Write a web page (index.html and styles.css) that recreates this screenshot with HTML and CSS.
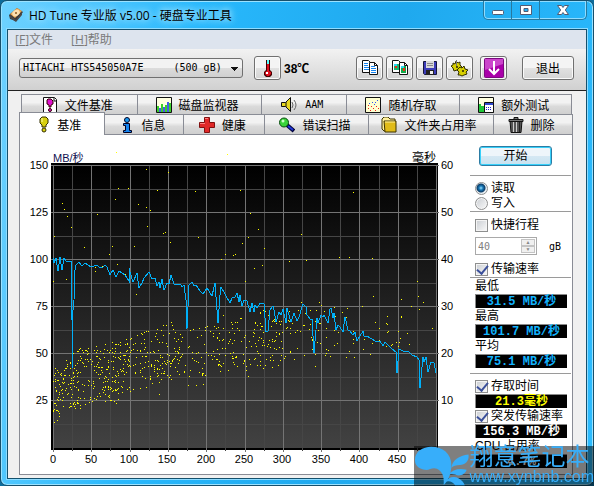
FILE: index.html
```html
<!DOCTYPE html>
<html lang="zh-CN">
<head>
    <meta charset="UTF-8">
    <meta name="viewport" content="width=device-width, initial-scale=1.0">
    <link rel="stylesheet" href="styles.css">
    <title>HD Tune 专业版 v5.00 - 硬盘专业工具</title>
</head>
<body>

    <div class="window">
        <header class="titlebar">
            <svg class="app-icon" width="16" height="16" viewBox="0 0 16 16">
                <path d="M1 8L9 1l6 4-7 9-6-2z" fill="#3a3a3a"/>
                <path d="M2 7L9 1l5 3-7 7z" fill="#e8a552"/>
                <ellipse cx="8" cy="6" rx="4" ry="3" fill="#fbe0b0" transform="rotate(-35 8 6)"/>
                <circle cx="8" cy="6" r="1" fill="#8a5a20"/>
                <path d="M2 8l6 5 6-8v3l-6 7-6-4z" fill="#4a4a4a"/>
            </svg>
            <h1>HD Tune 专业版 v5.00 - 硬盘专业工具</h1>
            <div class="window-buttons">
                <button aria-label="最小化"><svg width="14" height="12" viewBox="0 0 14 12"><rect x="1.500" y="6.500" width="11" height="4" rx="1" fill="#fff" stroke="#535b72"/></svg></button>
                <button aria-label="最大化"><svg width="14" height="12" viewBox="0 0 14 12"><path d="M1.500 1.500h11v9h-11zM5 4.500v3h4v-3z" fill="#fff" fill-rule="evenodd" stroke="#535b72"/></svg></button>
                <button aria-label="关闭" class="close"><svg width="14" height="12" viewBox="0 0 14 12"><path d="M1.500 1.500h4L7 3.500l1.500-2h4L9.300 6l3.200 4.500h-4L7 8.500l-1.500 2h-4L4.700 6z" fill="#fff" stroke="#535b72"/></svg></button>
            </div>
        </header>

        <main class="client">
            <nav class="menu">
                <a href="#">[<u>F</u>]文件</a>
                <a href="#">[<u>H</u>]帮助</a>
            </nav>

            <div class="toolbar">
                <select class="drive" aria-label="硬盘">
                    <option>HITACHI HTS545050A7E&nbsp;&nbsp;&nbsp;&nbsp;&nbsp;(500 gB)</option>
                </select>
                <button class="tool" aria-label="温度">
                    <svg width="16" height="18" viewBox="0 0 16 18"><path d="M6 1h4v10l2 2v3l-2 2H6l-2-2v-3l2-2z" fill="#400"/><path d="M7 1h2v5H7z" fill="#5ff"/><path d="M7 5h2v7l2 1v2l-2 2H7l-2-2v-2l2-1z" fill="#e01020"/><path d="M6 13h2v2H6z" fill="#fff"/></svg>
                </button>
                <span class="temperature">38℃</span>
                <div class="tools">
                    <button class="tool" aria-label="复制文字">
                        <svg width="18" height="18" viewBox="0 0 18 18"><path d="M1.500 1.500h6l2 2v10h-8z" fill="#fff" stroke="#111"/><path d="M8.500 3.500h5l3 3v9h-8z" fill="#fff" stroke="#111"/><path d="M3 4.500h4M3 6.500h4M3 8.500h5M3 10.500h5M10 7.500h4M10 9.500h5M10 11.500h5M10 13.500h5" stroke="#1584ef"/><path d="M13.500 3.500v3h3" fill="none" stroke="#111"/></svg>
                    </button>
                    <button class="tool" aria-label="复制图像">
                        <svg width="18" height="18" viewBox="0 0 18 18"><path d="M1.500 1.500h6l2 2v10h-8z" fill="#fff" stroke="#111"/><path d="M3 5h5v6H3z" fill="#17b46e"/><path d="M3 5h3v2H3z" fill="#29d7f4"/><path d="M8.500 3.500h5l3 3v9h-8z" fill="#fff" stroke="#111"/><path d="M10 7h5v7h-5z" fill="#10a848"/><path d="M10 7h3v2h-3z" fill="#29d7f4"/><path d="M4 7h2v2H4zM12 9h2v3h-2z" fill="#f03010"/><path d="M13.500 3.500v3h3" fill="none" stroke="#111"/></svg>
                    </button>
                    <button class="tool" aria-label="保存">
                        <svg width="18" height="18" viewBox="0 0 18 18"><path d="M2.500 2.500h13v13h-12l-1-1z" fill="#3c3cb8" stroke="#16163a"/><path d="M5 2h8v7H5z" fill="#d8d8d8"/><path d="M6 4.500h6M6 6.500h6" stroke="#888"/><path d="M5 11h8v5H5z" fill="#222"/><path d="M9 12h3v3H9z" fill="#eee"/></svg>
                    </button>
                    <button class="tool" aria-label="选项">
                        <svg width="18" height="18" viewBox="0 0 18 18"><path d="M2 4l2 1 1-3 2 2 2-1v3l2 2-2 1v3l-3-1-3 1-1-3-2-2 2-1z" fill="#d8d000" stroke="#333000"/><path d="M9 8l2 1 2-2 1 3 3 1-2 2 1 2-3 1-2 1-2-1H7l1-3-2-2z" fill="#d8d000" stroke="#333000"/><path d="M5 7h2v2H5zM11 11h2v2h-2z" fill="#554f00"/><path d="M5.500 1v6" stroke="#777"/></svg>
                    </button>
                    <button class="tool update" aria-label="更新">
                        <svg width="20" height="20" viewBox="0 0 20 20"><rect x=".5" y=".5" width="19" height="19" rx="1" fill="#a900a9" stroke="#7c0a80"/><path d="M1 1h18v5L1 12z" fill="#cb45cb"/><path d="M10 3v12M5 11l5 5 5-5" fill="none" stroke="#fff" stroke-width="2"/></svg>
                    </button>
                    <button class="tool exit">退出</button>
                </div>
            </div>

            <div class="tabs">
                <div class="tab-row upper">
                    <button class="w116"><svg width="16" height="16" viewBox="0 0 16 16"><path d="M1.500.5h11l2 2v13h-13z" fill="#fff" stroke="#111"/><path d="M12 1v3h3" fill="none" stroke="#111"/><path d="M6 2h3l2 2v3L9 8v2H7V8L5 7V3z" fill="#e010d0" stroke="#300"/><circle cx="8" cy="13" r="1.500" fill="#e010d0" stroke="#300"/></svg>文件基准</button>
                    <button class="w125"><svg width="16" height="16" viewBox="0 0 16 16"><path d="M.5.5h15v15H.5z" fill="#ffffe0" stroke="#111"/><path d="M1 9h2v6H1zM5 7h2v8H5zM9 8h2v7H9zM13 6h2v9h-2z" fill="#3ad02c"/><path d="M3 11h2v4H3zM7 10h2v5H7zM11 5h2v10h-2z" fill="#4a5be8"/></svg>磁盘监视器</button>
                    <button class="w84"><svg width="18" height="16" viewBox="0 0 18 16"><path d="M1.500 5.500h4l5-5v14l-5-5h-4z" fill="#e9d820" stroke="#111"/><path d="M6 5v5" stroke="#111"/><path d="M12 5q2 3 0 6M14 3q4 5 0 10" fill="none" stroke="#666"/></svg><span class="latin">AAM</span></button>
                    <button class="w114"><svg width="16" height="16" viewBox="0 0 16 16"><path d="M.5.5h15v15H.5z" fill="#ffffd0" stroke="#111"/><path d="M3 11h1v1H3zM6 9h1v1H6zM8 11h1v1H8zM5 13h1v1H5zM11 9h1v1h-1zM13 11h1v1h-1zM10 13h1v1h-1zM3 8h1v1H3z" fill="#e22"/><path d="M4 6h1v1H4zM7 5h1v1H7zM10 5h1v1h-1zM12 3h1v1h-1zM9 7h1v1H9z" fill="#35e"/></svg>随机存取</button>
                    <button class="w112"><svg width="16" height="16" viewBox="0 0 16 16"><path d="M.5.5h15v15H.5z" fill="#ffffe0" stroke="#111"/><path d="M1 7h2v8H1zM3 9h3v6H3z" fill="#20c838"/><path d="M6.500 5.500h9v10h-9z" fill="#fff" stroke="#111"/><path d="M7 6h8v2H7z" fill="#3048d0"/><path d="M8 10h1v1H8zM10 10h1v1h-1zM12 10h1v1h-1zM8 12h1v1H8zM10 12h1v1h-1zM12 12h1v1h-1z" fill="#22c"/></svg>额外测试</button>
                </div>
                <div class="tab-row lower">
                    <button class="w84 active"><svg width="12" height="17" viewBox="0 0 12 17"><path d="M4 1h4l2 2v4L8 9v2H4V9L2 7V3z" fill="#d8d010" stroke="#332f00"/><circle cx="6" cy="14" r="2" fill="#d8d010" stroke="#332f00"/><path d="M4 2v4" stroke="#ffa"/></svg>基准</button>
                    <button class="w79"><svg width="16" height="16" viewBox="0 0 16 16"><circle cx="8" cy="3" r="2.500" fill="#1898f0" stroke="#002"/><path d="M4.500 6.500h6v7h2v2h-8v-2h2v-5h-2z" fill="#1584ef" stroke="#002"/></svg>信息</button>
                    <button class="w80"><svg width="16" height="16" viewBox="0 0 16 16"><path d="M5.500.5h5v5h5v5h-5v5h-5v-5h-5v-5h5z" fill="#e02828" stroke="#801010"/><path d="M6 1.500h3M1 6.500h5" stroke="#ff8080"/></svg>健康</button>
                    <button class="w104"><svg width="17" height="16" viewBox="0 0 17 16"><path d="M9 8l7 6" stroke="#000038" stroke-width="4"/><path d="M10 9l5 4" stroke="#2038d8" stroke-width="2"/><circle cx="6" cy="5.500" r="4.500" fill="#39d43a" stroke="#0a4a10"/><circle cx="5" cy="4" r="1.500" fill="#c9ffc5"/></svg>错误扫描</button>
                    <button class="w127"><svg width="16" height="16" viewBox="0 0 16 16"><path d="M1 2l2-2h4l2 2h5v12H3L1 12z" fill="#fff09a" stroke="#3d3300"/><path d="M3 4h12v11H4z" fill="#e0bb18" stroke="#3d3300"/><path d="M4 5h10" stroke="#fff09a"/></svg>文件夹占用率</button>
                    <button class="w78"><svg width="16" height="16" viewBox="0 0 16 16"><path d="M2 4h12l-1 11.500H3z" fill="#555" stroke="#111"/><path d="M5.500 5v10M8.500 5v10" stroke="#ccc"/><path d="M11.500 5v10" stroke="#222"/><path d="M1 2.500h14v2H1zM6 .5h4v2H6z" fill="#777" stroke="#111"/></svg>删除</button>
                </div>
            </div>

            <section class="panel">
                <svg class="chart" viewBox="20 135 450 339" role="img" aria-label="基准">
                    <defs>
                        <linearGradient id="plot" x1="0" y1="0" x2="0" y2="1">
                            <stop offset="0" stop-color="#000"/>
                            <stop offset="1" stop-color="#424242"/>
                        </linearGradient>
                    </defs>
                    <g shape-rendering="crispEdges">
                        <rect x="51" y="163" width="387" height="287" fill="#000"/>
                        <rect x="53" y="165" width="383" height="283" fill="url(#plot)"/>
                        <path id="gridMinor" class="grid-minor"/>
                        <path id="gridMajor" class="grid-major"/>
                        <path id="dots" class="dots"/>
                        <polyline class="speed" points="53,258 54,263 56,258 58,271 60,257 62,270 64,258 66,261 71,261 72,320 72,369 73,310 74,300 75,270 76,265 79,262 82,266 85,263 91,267 94,266 97,265 100,268 103,267 105,265 107,267 110,275 113,270 116,277 119,271 122,273 125,275 129,281 129,268 133,282 137,273 139,288 142,283 144,278 149,272 152,279 155,278 157,286 159,282 160,288 162,279 164,290 167,283 169,284 171,275 174,284 181,285 182,287 184,285 186,300 187,329 189,285 192,282 194,286 196,285 200,291 203,294 207,288 212,296 215,283 216,297 218,323 220,295 221,287 225,294 230,303 232,298 235,297 237,293 239,302 240,295 242,306 244,300 247,301 250,312 252,303 254,312 255,305 257,308 260,303 264,304 266,332 268,331 270,310 273,306 274,310 276,322 279,312 281,315 283,309 286,323 287,308 291,322 294,313 297,321 299,317 303,304 306,307 307,315 310,319 312,319 314,353 317,318 318,323 321,315 323,317 324,315 328,323 330,309 331,308 333,318 334,313 336,330 338,325 340,327 343,332 345,317 348,330 350,331 353,335 355,332 357,341 363,331 364,336 367,336 375,341 380,341 383,346 385,342 388,345 392,349 396,352 397,373 399,349 405,352 408,351 412,355 417,357 419,360 420,388 423,357 424,362 426,357 428,372 431,362 434,363 436,373"/>
                    </g>
                    <g class="axis" text-anchor="end">
                        <text x="48" y="169">150</text>
                        <text x="48" y="216">125</text>
                        <text x="48" y="263">100</text>
                        <text x="48" y="310">75</text>
                        <text x="48" y="357">50</text>
                        <text x="48" y="404">25</text>
                    </g>
                    <g class="axis">
                        <text x="441" y="169">60</text>
                        <text x="441" y="216">50</text>
                        <text x="441" y="263">40</text>
                        <text x="441" y="310">30</text>
                        <text x="441" y="357">20</text>
                        <text x="441" y="404">10</text>
                    </g>
                    <g class="axis" text-anchor="middle">
                        <text x="53" y="463">0</text>
                        <text x="91" y="463">50</text>
                        <text x="129" y="463">100</text>
                        <text x="167" y="463">150</text>
                        <text x="206" y="463">200</text>
                        <text x="244" y="463">250</text>
                        <text x="282" y="463">300</text>
                        <text x="321" y="463">350</text>
                        <text x="359" y="463">400</text>
                        <text x="397" y="463">450</text>
                    </g>
                    <text class="unit" x="53" y="162">MB/秒</text>
                    <text class="unit ms" x="412" y="162">毫秒</text>
                </svg>

                <form class="side">
                    <button type="button" class="start">开始</button>
                    <div class="group modes">
                        <label><input type="radio" name="mode" checked>读取</label>
                        <label><input type="radio" name="mode">写入</label>
                    </div>
                    <div class="group stroke">
                        <label><input type="checkbox">快捷行程</label>
                        <div class="amount">
                            <input type="text" id="size" value="40" disabled aria-label="快捷行程 gB">
                            <span class="spin"><i>▲</i><i>▼</i></span>
                            <label for="size" class="latin">gB</label>
                        </div>
                        <label><input type="checkbox" checked>传输速率</label>
                    </div>
                    <div class="group">
                        <p>最低</p>
                        <output>31.5 MB/秒</output>
                        <p>最高</p>
                        <output>101.7 MB/秒</output>
                        <p>平均</p>
                        <output>75.1 MB/秒</output>
                    </div>
                    <div class="group times">
                        <label><input type="checkbox" checked>存取时间</label>
                        <output class="yellow">21.3毫秒</output>
                        <label><input type="checkbox" checked>突发传输速率</label>
                        <output class="white">156.3 MB/秒</output>
                        <p>CPU 占用率</p>
                        <output class="white">4.7%</output>
                    </div>
                </form>
            </section>
        </main>
    </div>

    <div class="watermark">
        <svg width="58" height="40" viewBox="0 0 58 40" fill="#37aefa">
            <path d="M1 14C1 5 9 0 18 0c12 0 21 7 21 19 0 9-3 16-8 21 1-9-2-15-7-17-5-2-8 2-13 1C5 23 1 19 1 14z"/>
            <path d="M39 22c1-8 8-13 18-14 1 7-4 11-9 11-4 0-7 1-9 3z"/>
            <path d="M36 29c4-5 11-7 19-5-2 6-8 7-12 5-3-1-5-1-7 0z"/>
            <path d="M32 37c4-5 9-7 15-4 3 2 5 4 6 7H43c-3-4-7-5-11-3z"/>
        </svg>
        <div>
            <strong>翔意笔记本</strong>
            <span>www.xynbnb.com</span>
        </div>
    </div>

    <script src="chart.js"></script>
</body>
</html>
```
FILE: styles.css
```css
* {
    box-sizing: border-box;
}

body {
    margin: 0;
    font-family: "Liberation Sans", "Noto Sans CJK SC", sans-serif;
    font-size: 12px;
    color: #000;
    background-color: #0d6c9c;
}

button, input, select {
    font: inherit;
    color: inherit;
    margin: 0;
    padding: 0;
}

h1, p {
    margin: 0;
    font-weight: normal;
}

/* Ventana */
.window {
    min-height: 100vh;
    padding: 0 6px 6px;
    border: 1px solid #17506c;
    border-radius: 7px;
    background: linear-gradient(100deg, #6fd2ff 0, #28b8fc 30%, #1fa9ee 60%, #2cbcff 100%);
    box-shadow: inset 0 0 0 1px #9be2ff;
    display: flex;
    flex-direction: column;
}

.titlebar {
    display: flex;
    height: 28px;
    align-items: center;
    padding-left: 1px;
}

.titlebar h1 {
    flex: 1;
    margin-left: 5px;
    font-family: "Open Sans", "Noto Sans CJK SC", sans-serif;
    font-size: 12px;
    text-shadow: 0 0 6px #b5eaff, 0 0 8px #b5eaff;
}

.window-buttons {
    display: flex;
    align-self: flex-start;
    border: 1px solid #27799f;
    border-top: none;
    border-radius: 0 0 5px 5px;
    box-shadow: inset 0 0 0 1px #8fdcff;
}

.window-buttons button {
    display: flex;
    align-items: center;
    justify-content: center;
    width: 28px;
    height: 18px;
    border: none;
    border-right: 1px solid #27799f;
    background: none;
}

.window-buttons .close {
    width: 46px;
    border-right: none;
}

.client {
    flex: 1;
    border: 1px solid #14506c;
    background-color: #f0f0f0;
    box-shadow: 0 0 0 1px #8fdcff;
}

.menu {
    display: flex;
    gap: 18px;
    height: 19px;
    padding-left: 7px;
    line-height: 19px;
    font-family: "Open Sans", "Noto Sans CJK SC", sans-serif;
    background-color: #dde4ee;
}

.menu a {
    color: #7a7a7a;
    text-decoration: none;
}

/* Barra de herramientas */
.toolbar {
    display: flex;
    align-items: center;
    height: 42px;
    padding: 0 12px 4px 11px;
    border-bottom: 1px solid #222;
    background: linear-gradient(#f2f2f2, #d0d0d0);
}

.drive {
    appearance: none;
    width: 224px;
    height: 20px;
    padding-left: 3px;
    border: 1px solid #707070;
    border-radius: 3px;
    font-family: "DejaVu Sans Mono", monospace;
    font-size: 10px;
    background:
        linear-gradient(to bottom right, #111 50%, transparent 50%) 215px 8px / 4px 4px no-repeat,
        linear-gradient(to bottom left, #111 50%, transparent 50%) 211px 8px / 4px 4px no-repeat,
        linear-gradient(#f2f2f2 50%, #dcdcdc 50%, #d0d0d0);
}

.tool {
    display: flex;
    align-items: center;
    justify-content: center;
    width: 27px;
    height: 24px;
    border: 1px solid #707070;
    border-radius: 3px;
    background: linear-gradient(#f4f4f4 50%, #e2e2e2 50%, #d4d4d4);
    box-shadow: inset 0 0 0 1px #fafafa;
}

.drive + .tool {
    margin-left: 11px;
}

.temperature {
    margin-left: 3px;
    font-weight: bold;
}

.tools {
    display: flex;
    gap: 3px;
    margin-left: auto;
}

.update {
    margin-left: 4px;
}

.exit {
    width: 52px;
    margin-left: 12px;
}

/* Pestañas */
.tabs {
    padding: 3px 13px 0 11px;
}

.tab-row {
    display: flex;
    height: 20px;
}

.upper {
    padding: 0 1px 0 2px;
}

.tab-row button {
    display: flex;
    align-items: center;
    justify-content: center;
    gap: 7px;
    min-width: 0;
    padding-right: 4px;
    white-space: nowrap;
    border: 1px solid #898c95;
    border-left-width: 0;
    border-bottom: none;
    background: linear-gradient(#f2f2f2 40%, #dadada 60%, #cfcfcf);
}

.tab-row button:first-child {
    border-left-width: 1px;
}

.tab-row .active {
    position: relative;
    height: 23px;
    margin-top: -2px;
    background: #fff;
}

.w78 { flex: 78 0 0; }
.w79 { flex: 79 0 0; }
.w80 { flex: 80 0 0; }
.w84 { flex: 84 0 0; }
.w104 { flex: 104 0 0; }
.w112 { flex: 112 0 0; }
.w114 { flex: 114 0 0; }
.w116 { flex: 116 0 0; }
.w125 { flex: 125 0 0; }
.w127 { flex: 127 0 0; }

.latin {
    font-family: "DejaVu Sans Mono", monospace;
    font-size: 10px;
}

.panel {
    display: flex;
    align-items: flex-start;
    margin: 0 13px 0 11px;
    border: 1px solid #898c95;
    background-color: #fff;
}

/* Gráfica */
.chart {
    flex: 1;
    min-width: 0;
    display: block;
}

.grid-minor, .grid-major {
    fill: none;
    stroke: #464646;
    stroke-width: 1px;
}

.grid-major {
    stroke: #747474;
}

.dots {
    fill: #ffff00;
}

.speed {
    fill: none;
    stroke: #00b0f8;
    stroke-width: 1px;
}

.axis {
    font-size: 11px;
}

.unit {
    font-size: 11px;
    fill: #101050;
}

.ms {
    font-size: 12px;
    fill: #000;
}

/* Columna derecha */
.side {
    width: 102px;
    padding-top: 11px;
}

.start {
    display: block;
    width: 73px;
    height: 20px;
    margin: 0 0 9px 9px;
    border: 1px solid #2c7ca4;
    border-radius: 3px;
    background: linear-gradient(#eef5fa 50%, #d5e8f3 50%, #c8e2f0);
    box-shadow: inset 0 0 0 1px #37d0fa;
    line-height: 16px;
}

.group {
    margin-right: 1px;
    padding-left: 5px;
    border-top: 1px solid #9a9a9a;
}

.side label {
    display: flex;
    align-items: center;
    gap: 3px;
    height: 15px;
    line-height: 15px;
    white-space: nowrap;
}

.side p {
    height: 16px;
    line-height: 16px;
}

.modes {
    padding-top: 5px;
}

.stroke {
    padding-top: 6px;
}

.side input[type="radio"],
.side input[type="checkbox"] {
    appearance: none;
    flex: none;
    width: 13px;
    height: 13px;
    border: 1px solid #8e8f8f;
    background: linear-gradient(135deg, #c9cdd2, #fafafa);
    box-shadow: inset 0 0 0 1px #f4f4f4;
}

.side input[type="radio"] {
    border-radius: 50%;
}

.side input[type="radio"]:checked {
    background: radial-gradient(circle at 5px 5px, #9be4ff 0, #1878b8 2px, #0d3c66 4px, #e8eef2 5px);
    box-shadow: none;
}

.side input[type="checkbox"]:checked::before {
    content: "";
    display: block;
    width: 5px;
    height: 9px;
    margin: -1px 0 0 3px;
    border: solid #3a4f9a;
    border-width: 0 2px 2px 0;
    transform: rotate(40deg);
}

.amount {
    display: flex;
    height: 18px;
    margin: 4px 0 7px;
}

.amount input {
    width: 45px;
    padding-left: 2px;
    border: 1px solid #a9a9a9;
    border-right: none;
    background-color: #fff;
    color: #808080;
    font-family: "DejaVu Sans Mono", monospace;
    font-size: 10px;
}

.spin {
    display: flex;
    flex-direction: column;
    width: 17px;
    padding: 1px;
    border: 1px solid #a9a9a9;
    border-left: none;
}

.spin i {
    flex: 1;
    border: 1px solid #c4c4c4;
    background-color: #f0f0f0;
    color: #888;
    font-size: 5px;
    line-height: 5px;
    font-style: normal;
    text-align: center;
}

.amount .latin {
    height: 18px;
    margin-left: 12px;
}

output {
    display: block;
    width: 92px;
    height: 14px;
    border-top: 1px solid #8a8a8a;
    border-left: 1px solid #8a8a8a;
    background-color: #000;
    color: #12b4ff;
    font-family: "Liberation Mono", "Noto Sans CJK SC", monospace;
    font-size: 12px;
    font-weight: bold;
    line-height: 15px;
    text-align: center;
    white-space: nowrap;
}

.yellow {
    color: #ffff00;
}

.white {
    color: #fff;
}

.times {
    margin-top: 5px;
    padding-top: 5px;
}

.times label + output + label {
    height: 16px;
}

/* Marca de agua sobre la ventana */
.watermark {
    position: fixed;
    right: 0;
    bottom: 0;
    display: flex;
    width: 180px;
    height: 40px;
    background-color: rgba(0, 0, 0, 0.5);
    color: #37aefa;
    white-space: nowrap;
}

.watermark strong {
    display: block;
    font-size: 24px;
    font-weight: normal;
    line-height: 22px;
}

.watermark span {
    display: block;
    font-size: 16px;
    line-height: 18px;
}
```
FILE: chart.js
```js
// Rejilla: 20 columnas y 12 filas, una de cada dos más clara
let minor = "";
let major = "";

for (let i = 0; i <= 20; i++) {
    const x = Math.round(53 + i * 19.15) + 0.5;
    if (i % 2 == 0) {
        major += "M" + x + " 165V452";
    } else {
        minor += "M" + x + " 165V451";
    }
}

for (let i = 0; i < 12; i++) {
    const y = Math.round(165 + i * 23.5) + 0.5;
    if (i % 2 == 0) {
        major += "M51 " + y + "H439";
    } else {
        minor += "M53 " + y + "H437";
    }
}

document.getElementById("gridMinor").setAttribute("d", minor);
document.getElementById("gridMajor").setAttribute("d", major);

// Tiempos de acceso aislados
const points = [
    [116, 152], [227, 154], [54, 236], [62, 203], [64, 209], [67, 216], [71, 227], [84, 247], [97, 214], [95, 271],
    [95, 267], [102, 266], [64, 259], [66, 279], [53, 281], [109, 254], [112, 246], [115, 199], [118, 188], [128, 188],
    [117, 264], [125, 274], [134, 246], [136, 294], [138, 204], [146, 169], [146, 207], [147, 226], [150, 210], [157, 190],
    [163, 233], [165, 232], [168, 172], [170, 242], [195, 191], [198, 237], [221, 259], [225, 254], [233, 255], [235, 254],
    [223, 315], [240, 190], [250, 213], [258, 229], [242, 243], [248, 237], [264, 248], [262, 265], [254, 268], [245, 281],
    [289, 261], [301, 234], [306, 260], [339, 257], [349, 257], [353, 192], [372, 258], [417, 281], [418, 296], [423, 302],
    [419, 309], [411, 306], [401, 299], [373, 296], [362, 306], [347, 308], [401, 316], [387, 316], [319, 302], [321, 305],
    [334, 307], [298, 310], [289, 311], [301, 302], [323, 315], [342, 312], [432, 328], [407, 333], [409, 344], [400, 338],
    [401, 317], [386, 323], [375, 322], [370, 354], [363, 349], [354, 357], [315, 366], [346, 357], [326, 353], [326, 349],
    [54, 422], [57, 420], [59, 416], [59, 413], [116, 403], [159, 394], [188, 385], [196, 385], [203, 384], [248, 376]
];

// Nube principal, con semilla fija para que salga siempre igual
let seed = 7;
function random() {
    seed = (seed * 16807) % 2147483647;
    return seed / 2147483647;
}

// x inicial, x final, cantidad, techo izq/der, suelo izq/der
const bands = [
    [53, 80, 120, 370, 346, 414, 408],
    [80, 120, 155, 348, 340, 408, 400],
    [120, 175, 160, 340, 320, 396, 378],
    [175, 240, 115, 330, 320, 380, 370],
    [240, 280, 85, 310, 310, 373, 366],
    [280, 330, 48, 310, 310, 362, 356],
    [330, 400, 26, 315, 320, 354, 346]
];

for (let b of bands) {
    for (let i = 0; i < b[2]; i++) {
        const t = random();
        const x = b[0] + t * (b[1] - b[0]);
        const top = b[3] + t * (b[4] - b[3]);
        const bottom = b[5] + t * (b[6] - b[5]);
        const y = top + random() * (bottom - top);
        points.push([Math.round(x), Math.round(y)]);
    }
}

document.getElementById("dots").setAttribute("d", points.map(p => "M" + p[0] + " " + p[1] + "h1v1h-1z").join(""));
```
